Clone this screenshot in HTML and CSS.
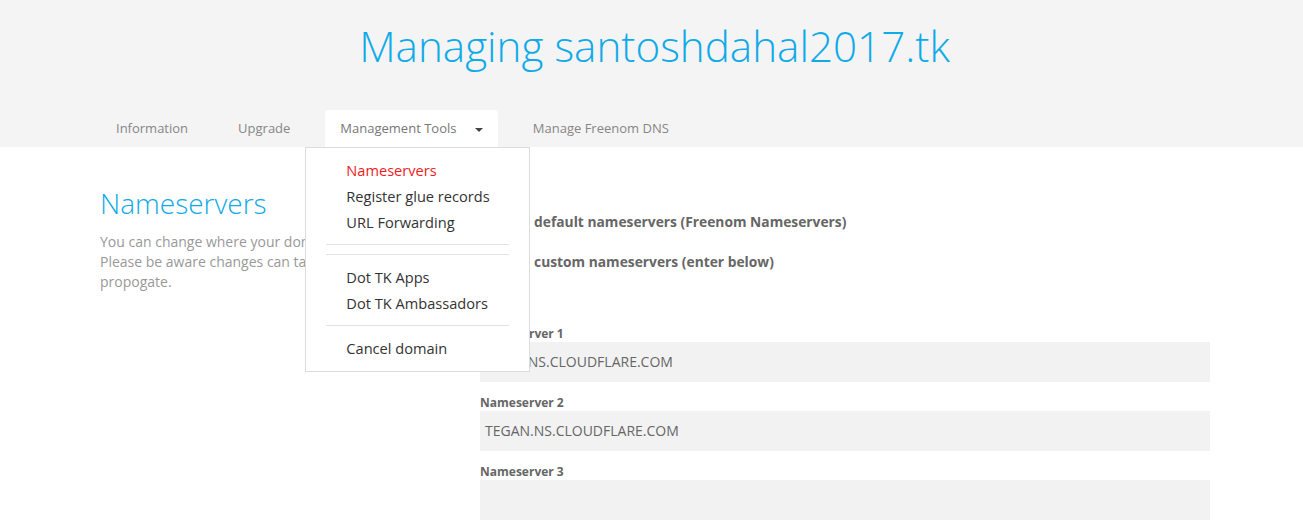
FILE: index.html
```html
<!DOCTYPE html>
<html>

<head>
  <meta charset="UTF-8">
  <title>Managing santoshdahal2017.tk</title>
  <link rel="stylesheet" href="styles.css">
</head>

<body>
  <div class="header">
    <h1 class="title">Managing santoshdahal2017.tk</h1>
    <ul class="tabs">
      <li class="tab">Information</li>
      <li class="tab">Upgrade</li>
      <li class="tab active">Management Tools <span class="caret"></span>
        <ul class="dropdown">
          <li class="current">Nameservers</li>
          <li>Register glue records</li>
          <li>URL Forwarding</li>
          <li class="divider"></li>
          <li class="divider"></li>
          <li>Dot TK Apps</li>
          <li>Dot TK Ambassadors</li>
          <li class="divider"></li>
          <li>Cancel domain</li>
        </ul>
      </li>
      <li class="tab">Manage Freenom DNS</li>
    </ul>
  </div>

  <div class="container">
    <div class="leftCol">
      <h2 class="sectionTitle">Nameservers</h2>
      <p class="intro">You can change where your domain points to here.<br>
        Please be aware changes can take up to 24 hours to<br>
        propogate.</p>
    </div>
    <div class="rightCol">
      <label class="option"><input type="radio" name="ns"><span class="use">Use</span> default nameservers (Freenom Nameservers)</label>
      <label class="option"><input type="radio" name="ns" checked><span class="use">Use</span> custom nameservers (enter below)</label>

      <div class="fields">
        <div class="fieldLabel">Nameserver 1</div>
        <div class="field">KEVIN.NS.CLOUDFLARE.COM</div>
        <div class="fieldLabel">Nameserver 2</div>
        <div class="field">TEGAN.NS.CLOUDFLARE.COM</div>
        <div class="fieldLabel">Nameserver 3</div>
        <div class="field"></div>
      </div>
    </div>
  </div>
</body>

</html>
```

FILE: styles.css
```css
body {
  margin: 0;
  padding: 0;
  font-family: "Open Sans", "Liberation Sans", sans-serif;
  background-color: white;
  overflow: hidden;
}

.header {
  background-color: #f4f4f4;
  height: 147px;
}

.title {
  margin: 0;
  padding-top: 22px;
  padding-left: 6px;
  text-align: center;
  font-size: 42.2px;
  line-height: 48px;
  font-weight: 300;
  color: #10aae9;
}

.tabs {
  list-style: none;
  margin: 40px 0 0 101px;
  padding: 0;
  display: flex;
}

.tab {
  position: relative;
  height: 37px;
  line-height: 37px;
  padding: 0 15px;
  margin-right: 20px;
  font-size: 13px;
  color: #868686;
}

.tab.active {
  background-color: white;
  border-radius: 4px 4px 0 0;
  color: #777;
}

.caret {
  display: inline-block;
  width: 0;
  height: 0;
  margin-left: 15px;
  vertical-align: middle;
  border-left: 4px solid transparent;
  border-right: 4px solid transparent;
  border-top: 4px solid #444;
}

.dropdown {
  position: absolute;
  top: 37px;
  left: -20px;
  width: 223px;
  margin: 0;
  padding: 9px 0 10px 0;
  list-style: none;
  background-color: white;
  border: 1px solid #dcdcdc;
  z-index: 10;
}

.dropdown li {
  padding: 3px 20px 3px 40px;
  line-height: 20px;
  font-size: 14.6px;
  color: #333;
}

.dropdown li.current {
  color: #ee1b22;
}

.dropdown li.divider {
  height: 1px;
  padding: 0;
  margin: 9px 20px;
  background-color: #e3e3e3;
}

.container {
  display: flex;
  width: 1110px;
  margin-left: 100px;
}

.leftCol {
  width: 350px;
  margin-right: 30px;
}

.sectionTitle {
  margin: 38px 0 11px 0;
  font-size: 28px;
  line-height: 36px;
  font-weight: 300;
  color: #10aae9;
}

.intro {
  margin: 0;
  font-size: 14px;
  line-height: 20px;
  color: #999;
}

.rightCol {
  flex: 1;
  padding-top: 64px;
}

.option {
  display: flex;
  align-items: center;
  height: 20px;
  margin-bottom: 20px;
  font-size: 13.8px;
  font-weight: bold;
  color: #666;
  white-space: pre;
}

.option input {
  margin: 0 9px 0 0;
}

.use {
  margin-right: 3px;
}

.fields {
  padding-top: 34px;
}

.fieldLabel {
  font-size: 12px;
  line-height: 17px;
  font-weight: bold;
  color: #666;
}

.field {
  height: 40px;
  line-height: 40px;
  margin-bottom: 12px;
  padding-left: 5px;
  background-color: #f2f2f2;
  font-size: 14px;
  color: #666;
}
```
